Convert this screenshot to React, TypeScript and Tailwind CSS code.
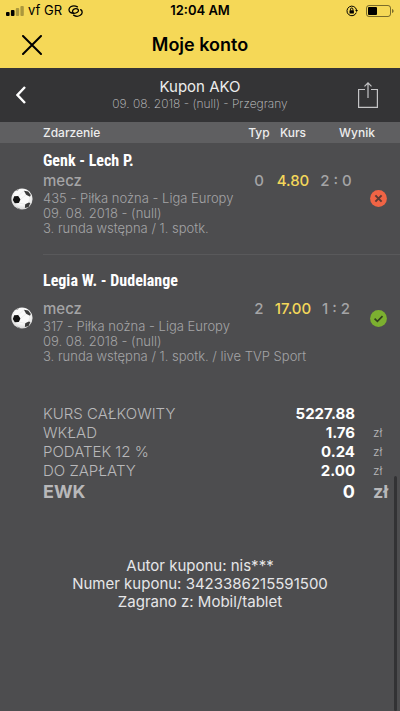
import clsx from 'clsx';

interface Bet {
  id: string;
  title: string;
  kind: string;
  details: string[];
  pick: string;
  odds: string;
  score: string;
  won: boolean;
}

interface Total {
  label: string;
  value: string;
  unit: string;
}

const bets: Bet[] = [
  {
    id: '435',
    title: 'Genk - Lech P.',
    kind: 'mecz',
    details: ['435 - Piłka nożna - Liga Europy', '09. 08. 2018 - (null)', '3. runda wstępna / 1. spotk.'],
    pick: '0',
    odds: '4.80',
    score: '2 : 0',
    won: false,
  },
  {
    id: '317',
    title: 'Legia W. - Dudelange',
    kind: 'mecz',
    details: [
      '317 - Piłka nożna - Liga Europy',
      '09. 08. 2018 - (null)',
      '3. runda wstępna / 1. spotk. / live TVP Sport',
    ],
    pick: '2',
    odds: '17.00',
    score: '1 : 2',
    won: true,
  },
];

const totals: Total[] = [
  { label: 'KURS CAŁKOWITY', value: '5227.88', unit: '' },
  { label: 'WKŁAD', value: '1.76', unit: 'zł' },
  { label: 'PODATEK 12 %', value: '0.24', unit: 'zł' },
  { label: 'DO ZAPŁATY', value: '2.00', unit: 'zł' },
];

function StatusBar() {
  return (
    <div className="grid grid-cols-3 items-center h-[22px] px-1.5 text-[13px]">
      <div className="flex items-center gap-1">
        <svg width="18" height="10" viewBox="0 0 18 10" aria-hidden="true">
          <rect x="0" y="6" width="3.6" height="4" rx="1" />
          <rect x="4.9" y="4" width="3.6" height="6" rx="1" />
          <rect x="9.8" y="2" width="3.4" height="8" rx="1" opacity="0.3" />
          <rect x="14.4" y="0" width="3.4" height="10" rx="1" opacity="0.3" />
        </svg>
        <span>vf GR</span>
        <svg className="ml-0.5" width="15" height="12" viewBox="0 0 15 12" fill="none" stroke="currentColor" strokeWidth="1.3" strokeLinecap="round" aria-hidden="true">
          <path d="M9.400 1.900C7.500.8 4.600.7 2.700 1.800.6 3.100.4 6 2.300 7.400c2 1.300 5.400 1.100 7.100-.1 1.500-1 1.400-2.800-.2-3.400-1.200-.4-2.700-.1-3.700.6" />
          <path d="M5.600 10.100c1.900 1.300 4.800 1.400 6.700.2 2.300-1.400 2.500-4.300.4-5.700" />
          <path d="M5.600 8.100C4.100 7.500 4.200 5.600 5.500 4.500" />
        </svg>
      </div>
      <span className="text-center font-semibold">12:04 AM</span>
      <div className="flex items-center justify-end gap-2">
        <svg width="12" height="12" viewBox="0 0 12 12" fill="none" stroke="currentColor" strokeWidth="1" aria-hidden="true">
          <path d="M10.300 7.600A4.800 4.800 0 1 1 10.500 5" />
          <path d="M9.100 5h2.900l-1.400 2z" fill="currentColor" stroke="none" />
          <rect x="3.500" y="5.300" width="4.400" height="3.300" rx="0.500" fill="currentColor" stroke="none" />
          <path d="M4.500 5.500V4.200a1.200 1.200 0 0 1 2.400 0v1.300" />
        </svg>
        <svg width="28" height="12" viewBox="0 0 28 12" aria-hidden="true">
          <rect x="0.500" y="0.500" width="24" height="11" rx="2.500" fill="none" stroke="#000" strokeOpacity="0.500" />
          <rect x="2" y="2" width="9" height="8" rx="1" />
          <path d="M26 4v4c1-.3 1.600-1 1.600-2S27 4.300 26 4z" opacity="0.500" />
        </svg>
      </div>
    </div>
  );
}

function FootballIcon() {
  return (
    <svg className="mx-auto" width="22" height="22" viewBox="0 0 22 22" aria-hidden="true">
      <defs>
        <radialGradient id="ball" cx="0.500" cy="0.400" r="0.600">
          <stop offset="0.600" stopColor="#fafafa" />
          <stop offset="1" stopColor="#d4d4d4" />
        </radialGradient>
        <clipPath id="ball-edge">
          <circle cx="11" cy="11" r="10.600" />
        </clipPath>
      </defs>
      <circle cx="11" cy="11" r="10.600" fill="url(#ball)" />
      <g clipPath="url(#ball-edge)">
        <path d="M3.200 8.300l4-.3 2.300 3.400-1.700 3.700-4 .1L1.800 12z" fill="#111" />
        <path d="M13 2.800l4.200.7 2.600 3.400-.8 1.800-3.900-1.900z" fill="#3a3a3a" />
        <path d="M14.200 16.200l3.600-1.700 1.500.6-1.700 3.800-3.700 1z" fill="#3a3a3a" />
        <path d="M4.500 2.800L8 .8l-1 1.600z M5.500 19.500l3 .8.500 1.500z" fill="#777" />
        <path d="M7.200 8l5.800-5.200M9.500 11.400l5.600-4.600M7.800 15.100l6.400 1.100M19 8.700l-1.200 5.800" stroke="#ddd" strokeWidth="0.500" fill="none" />
      </g>
    </svg>
  );
}

function ResultIcon({ won }: { won: boolean }) {
  return (
    <svg className="mx-auto" width="17" height="17" viewBox="0 0 17 17" fill="none" role="img" aria-label={won ? 'Wygrany' : 'Przegrany'}>
      <circle cx="8.500" cy="8.500" r="8.400" fill={won ? '#7cb030' : '#f06445'} />
      {won ? (
        <path d="M4.600 8.700l2.800 2.700 5.100-5.200" stroke="#33401f" strokeWidth="1.700" />
      ) : (
        <path d="M5.400 5.400l6.200 6.200M11.600 5.400l-6.200 6.200" stroke="#5c3a34" strokeWidth="2" />
      )}
    </svg>
  );
}

function BetRows({ bet, first }: { bet: Bet; first: boolean }) {
  return (
    <tbody>
      <tr>
        <td rowSpan={3} className="align-middle">
          <FootballIcon />
        </td>
        <td
          colSpan={4}
          className={clsx(
            "p-0 font-['Roboto_Condensed','Liberation_Sans_Narrow',sans-serif] text-base leading-5 font-bold text-white",
            first ? 'pt-2' : 'pt-4 pb-2 border-t border-[#59595b]',
          )}
        >
          {bet.title}
        </td>
        <td rowSpan={3} className={clsx('align-middle', !first && 'border-t border-[#59595b]')}>
          <ResultIcon won={bet.won} />
        </td>
      </tr>
      <tr className="text-[15px] leading-5 font-medium text-[#a4a4a6]">
        <td className="p-0">{bet.kind}</td>
        <td className="p-0 text-center">{bet.pick}</td>
        <td className="p-0 text-center text-[#f3d75a]">{bet.odds}</td>
        <td className="p-0 text-center">{bet.score}</td>
      </tr>
      <tr>
        <td colSpan={4} className="p-0 pb-[18px] text-[13px] leading-[15px] font-light text-[#a4a4a6]">
          {bet.details.map((line) => (
            <p key={line}>{line}</p>
          ))}
        </td>
      </tr>
    </tbody>
  );
}

export default function App() {
  return (
    <div className="relative min-h-screen bg-[#4d4d4f] font-['Inter',sans-serif] text-black">
      <header className="bg-[#f5d857]">
        <StatusBar />
        <div className="grid grid-cols-[64px_1fr_64px] items-center h-[46px]">
          <button type="button" aria-label="Zamknij" className="flex justify-center">
            <svg width="20" height="20" viewBox="0 0 20 20" fill="none" stroke="currentColor" strokeWidth="2" strokeLinecap="round">
              <path d="M1 1l18 18M19 1L1 19" />
            </svg>
          </button>
          <h1 className="text-center text-lg font-semibold">Moje konto</h1>
        </div>
      </header>

      <div className="grid grid-cols-[64px_1fr_64px] items-center h-[54px] bg-[#343436]">
        <button type="button" aria-label="Wstecz" className="flex pl-4 text-white">
          <svg width="10" height="18" viewBox="0 0 10 18" fill="none" stroke="currentColor" strokeWidth="2.400">
            <path d="M9 1L1.500 9 9 17" />
          </svg>
        </button>
        <div className="text-center">
          <h2 className="text-[15px] leading-[18px] text-[#ececec]">Kupon AKO</h2>
          <p className="text-xs leading-4 font-extralight text-[#c8c8ca]">09. 08. 2018 - (null) - Przegrany</p>
        </div>
        <button type="button" aria-label="Udostępnij" className="flex justify-center text-[#c4c4c6]">
          <svg width="20" height="26" viewBox="0 0 20 26" fill="none" stroke="currentColor" strokeWidth="1.200">
            <path d="M7 7.500H.6v17.900h18.800V7.500H13" />
            <path d="M10 16V1M6.500 4.400L10 .9l3.500 3.500" />
          </svg>
        </button>
      </div>

      <table className="w-full table-fixed border-separate border-spacing-0">
        <colgroup>
          <col className="w-[43px]" />
          <col />
          <col className="w-[26px]" />
          <col className="w-[42px]" />
          <col className="w-11" />
          <col className="w-[42px]" />
        </colgroup>
        <thead>
          <tr className="h-[21px] bg-[#5f5f61] text-xs text-[#ededed]">
            <td className="p-0" />
            <th className="p-0 text-left font-medium">Zdarzenie</th>
            <th className="p-0 font-medium">Typ</th>
            <th className="p-0 font-medium">Kurs</th>
            <th colSpan={2} className="p-0 font-medium">Wynik</th>
          </tr>
        </thead>
        {bets.map((bet, i) => (
          <BetRows key={bet.id} bet={bet} first={i === 0} />
        ))}
      </table>

      <table className="w-full mt-[22px] text-[15px] leading-[19px] text-[#b8b8ba]">
        <tbody>
          {totals.map((total) => (
            <tr key={total.label}>
              <th className="p-0 pl-[43px] text-left font-light">{total.label}</th>
              <td className="p-0 text-right font-bold text-white">{total.value}</td>
              <td className="w-[45px] p-0 pl-[18px] text-xs leading-[19px] font-light">{total.unit}</td>
            </tr>
          ))}
          <tr className="text-lg leading-6 font-bold">
            <th className="p-0 pl-[43px] text-left">EWK</th>
            <td className="p-0 text-right text-white">0</td>
            <td className="p-0 pl-[18px]">zł</td>
          </tr>
        </tbody>
      </table>

      <footer className="mt-[53px] text-center text-[15px] leading-[18px] text-[#e6e6e8]">
        <p>Autor kuponu: nis***</p>
        <p>Numer kuponu: 3423386215591500</p>
        <p>Zagrano z: Mobil/tablet</p>
      </footer>

      {/* scroll indicator */}
      <div className="absolute right-[3px] bottom-0 h-[33%] w-[3px] rounded-full bg-[#323234]" />
    </div>
  );
}
